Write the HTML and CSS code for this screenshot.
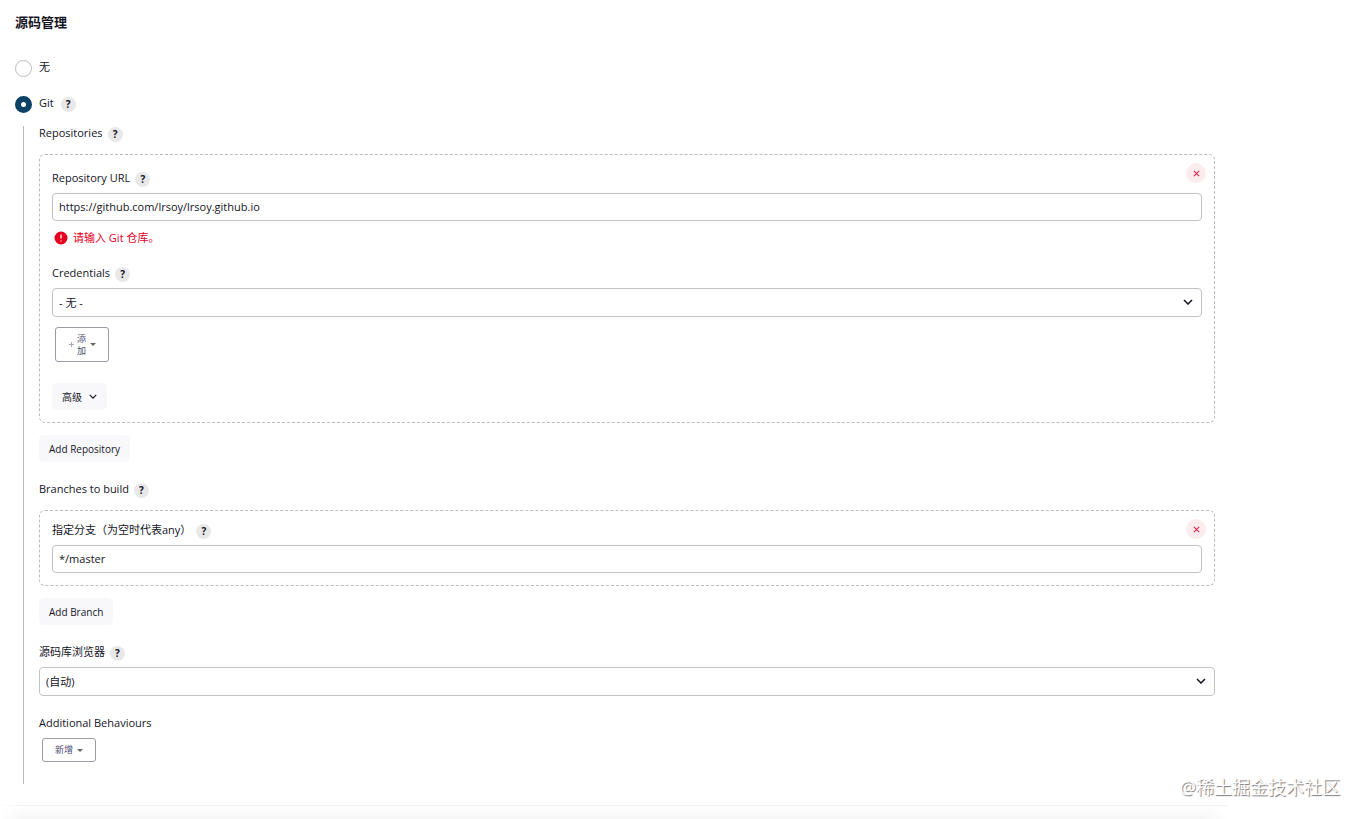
FILE: index.html
```html
<!DOCTYPE html>
<html lang="zh-CN">
<head>
    <meta charset="UTF-8">
    <meta name="viewport" content="width=device-width, initial-scale=1.0">
    <title>源码管理</title>
    <link rel="stylesheet" href="styles.css">
</head>
<body>
    <form class="config">
        <h2 class="section-title">源码管理</h2>

        <div class="radio-row">
            <input type="radio" name="scm" id="scmNone">
            <label for="scmNone">无</label>
        </div>
        <div class="radio-row">
            <input type="radio" name="scm" id="scmGit" checked>
            <label for="scmGit">Git</label>
            <button type="button" class="help">?</button>
        </div>

        <div class="nested">
            <div class="label-row group-label">
                <span>Repositories</span>
                <button type="button" class="help">?</button>
            </div>
            <div class="chunk chunk-repo">
                <button type="button" class="delete" aria-label="删除">
                    <svg viewBox="0 0 8 8"><path d="M1 1l6 6M7 1L1 7"/></svg>
                </button>
                <div class="label-row">
                    <label for="repoUrl">Repository URL</label>
                    <button type="button" class="help">?</button>
                </div>
                <input type="text" class="text-input" id="repoUrl" value="https://github.com/lrsoy/lrsoy.github.io">
                <div class="error">
                    <svg viewBox="0 0 14 14"><circle cx="7" cy="7" r="6.5"/><path d="M7 3.6v4M7 9.4v1.2"/></svg>
                    <span>请输入 Git 仓库。</span>
                </div>

                <div class="label-row next-field">
                    <label for="credentials">Credentials</label>
                    <button type="button" class="help">?</button>
                </div>
                <div class="select">
                    <select id="credentials"><option>- 无 -</option></select>
                    <svg viewBox="0 0 10 6"><path d="M1 1l4 4 4-4"/></svg>
                </div>
                <button type="button" class="menu-btn add-btn">
                    <svg class="plus" viewBox="0 0 5 5"><path d="M2.5 0v5M0 2.5h5"/></svg>
                    <span class="add-text">添加</span>
                    <span class="caret"></span>
                </button>
                <button type="button" class="btn advanced">
                    高级
                    <svg viewBox="0 0 10 6"><path d="M1 1l4 4 4-4"/></svg>
                </button>
            </div>
            <button type="button" class="btn">Add Repository</button>

            <div class="label-row group-label next-field">
                <span>Branches to build</span>
                <button type="button" class="help">?</button>
            </div>
            <div class="chunk">
                <button type="button" class="delete" aria-label="删除">
                    <svg viewBox="0 0 8 8"><path d="M1 1l6 6M7 1L1 7"/></svg>
                </button>
                <div class="label-row">
                    <label for="branch">指定分支（为空时代表any）</label>
                    <button type="button" class="help">?</button>
                </div>
                <input type="text" class="text-input" id="branch" value="*/master">
            </div>
            <button type="button" class="btn">Add Branch</button>

            <div class="label-row next-field">
                <label for="browser">源码库浏览器</label>
                <button type="button" class="help">?</button>
            </div>
            <div class="select">
                <select id="browser"><option>(自动)</option></select>
                <svg viewBox="0 0 10 6"><path d="M1 1l4 4 4-4"/></svg>
            </div>

            <div class="label-row next-field">
                <span>Additional Behaviours</span>
            </div>
            <button type="button" class="menu-btn">
                <span>新增</span>
                <span class="caret"></span>
            </button>
        </div>
    </form>
    <div class="bottom-bar"></div>
    <div class="watermark">@稀土掘金技术社区</div>
</body>
</html>
```
FILE: styles.css
```css
* {
    box-sizing: border-box;
}
body {
    position: relative;
    margin: 0;
    padding-top: 14px;
    background-color: #fff;
    color: #14141f;
    font-family: "Open Sans", "Noto Sans CJK SC", sans-serif;
    font-size: 11px;
    line-height: 16px;
}
button, input, select {
    margin: 0;
    font: inherit;
    color: inherit;
}
.config {
    margin: 0 148px 0 15px;
}
.section-title {
    margin: 0 0 30px;
    font-size: 13px;
    line-height: 16px;
}
.radio-row {
    display: flex;
    align-items: center;
    gap: 7px;
    height: 16px;
    margin-bottom: 20px;
}
.radio-row label, .label-row label, .label-row span {
    padding-bottom: 2px;
}
.radio-row input {
    appearance: none;
    flex: none;
    width: 17px;
    height: 17px;
    border: 1px solid #bbb;
    border-radius: 50%;
    background-color: #fff;
}
.radio-row input:checked {
    border: 6px solid #0b4164;
}
.nested {
    display: flex;
    flex-direction: column;
    align-items: flex-start;
    margin-top: -6px;
    margin-left: 8px;
    padding-left: 15px;
    padding-bottom: 22px;
    border-left: 1px solid #bbb;
}
.label-row {
    display: flex;
    align-items: center;
    gap: 5px;
    height: 16px;
    margin-bottom: 6px;
}
.group-label {
    margin-bottom: 12px;
}
.next-field {
    margin-top: 20px;
}
.help {
    flex: none;
    width: 15px;
    height: 15px;
    padding: 0;
    border: none;
    border-radius: 50%;
    background-color: #e8e8e8;
    font-size: 10px;
    font-weight: bold;
    line-height: 15px;
}
.chunk {
    position: relative;
    display: flex;
    flex-direction: column;
    align-items: flex-start;
    align-self: stretch;
    margin-bottom: 12px;
    padding: 12px;
    border: 1px dashed #bbb;
    border-radius: 6px;
}
.chunk-repo {
    padding-top: 16px;
}
.delete {
    position: absolute;
    top: 8px;
    right: 8px;
    display: flex;
    align-items: center;
    justify-content: center;
    width: 20px;
    height: 20px;
    padding: 0;
    border: none;
    border-radius: 50%;
    background-color: #fdecee;
}
.delete svg {
    width: 7px;
    height: 7px;
    stroke: #d8284c;
    stroke-width: 1.3;
}
.text-input, .select select {
    width: 100%;
    height: 28px;
    padding: 0 6px 2px;
    border: 1px solid #bfc3c6;
    border-radius: 4px;
    background-color: #fff;
}
.select {
    position: relative;
    width: 100%;
}
.select select {
    display: block;
    appearance: none;
    height: 29px;
    padding-bottom: 0;
}
.select svg {
    position: absolute;
    top: 11px;
    right: 9px;
    width: 10px;
    height: 6px;
    pointer-events: none;
}
.select svg, .btn svg {
    fill: none;
    stroke: #14141f;
    stroke-width: 1.5;
}
.error {
    display: flex;
    align-items: center;
    gap: 5px;
    margin-top: 9px;
    margin-left: 2px;
    color: #e6001f;
}
.error svg {
    width: 14px;
    height: 14px;
    fill: #e6001f;
}
.error path {
    stroke: #fff;
    stroke-width: 1.3;
}
.btn {
    display: flex;
    align-items: center;
    gap: 7px;
    height: 27px;
    padding: 0 10px;
    border: none;
    border-radius: 5px;
    background-color: #f8f8fb;
    font-size: 10px;
}
.menu-btn {
    display: flex;
    align-items: center;
    justify-content: center;
    gap: 4px;
    width: 54px;
    height: 24px;
    margin-left: 3px;
    padding: 0;
    border: 1px solid #999ca3;
    border-radius: 3px;
    background-color: #fff;
    color: #4d4d70;
    font-size: 9px;
    line-height: 12px;
}
.add-btn {
    gap: 3px;
    height: 35px;
    margin-top: 10px;
}
.add-text {
    width: 10px;
}
.plus {
    width: 5px;
    height: 5px;
    stroke: #aaa;
}
.caret {
    border-top: 3px solid #666;
    border-left: 3px solid transparent;
    border-right: 3px solid transparent;
}
.advanced {
    margin-top: 21px;
}
.advanced svg {
    width: 8px;
    height: 5px;
}
.bottom-bar {
    height: 14px;
    margin: 21px 136px 0 0;
    border-top: 1px solid #f0f0f0;
    border-image: linear-gradient(90deg, #fff, #f0f0f0 24px) 1;
    background-image: linear-gradient(90deg, #fff, transparent 24px, transparent calc(100% - 24px), #fff), linear-gradient(#fff, #f6f6f6);
}
.watermark {
    position: absolute;
    right: 23px;
    bottom: 20px;
    color: #fff;
    font-size: 18px;
    line-height: 24px;
    text-shadow: 1px 1px 1px #777;
}
```
